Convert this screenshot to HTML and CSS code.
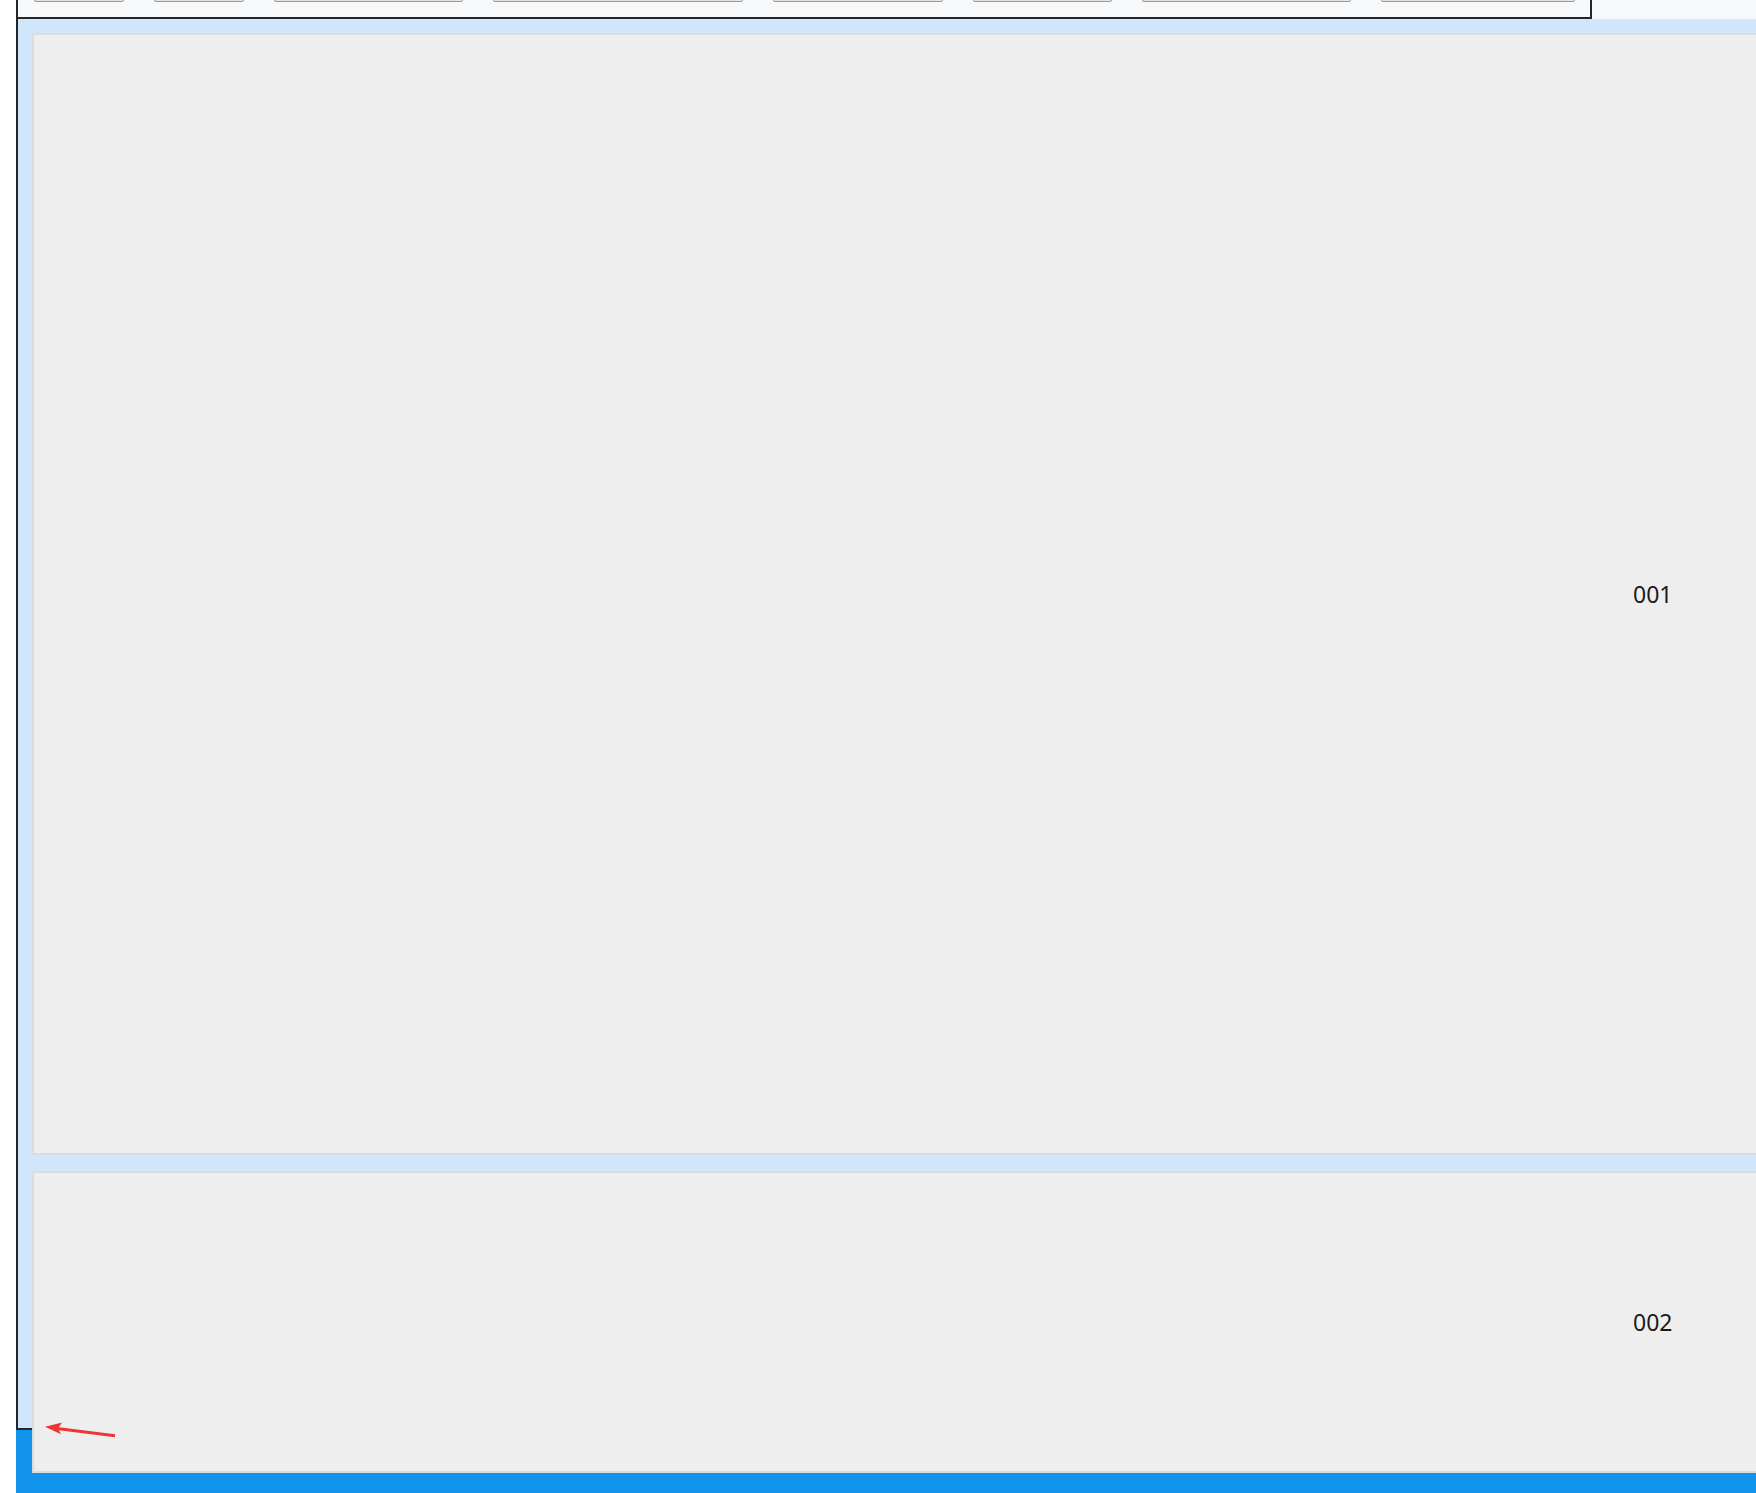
FILE: index.html
```html
<!DOCTYPE html>
<html lang="zh-CN">
<head>
	<meta charset="UTF-8">
	<title>layout</title>
	<link rel="stylesheet" href="styles.css">
</head>
<body>
	<div id="page">
		<div id="frame">
			<div class="top">
				<div class="toolbar">
					<div class="btn w90"></div>
					<div class="btn w90"></div>
					<div class="btn w189"></div>
					<div class="btn w250"></div>
					<div class="btn w170"></div>
					<div class="btn w139"></div>
					<div class="btn w209"></div>
					<div class="btn w194"></div>
				</div>
			</div>
			<div class="panels">
				<div class="panel big">001</div>
				<div class="panel small">002</div>
			</div>
		</div>
	</div>
	<!-- 标注箭头 -->
	<svg class="mark" width="80" height="24" viewBox="0 0 80 24">
		<line x1="15" y1="10.3" x2="75" y2="17.8" stroke="#ee3535" stroke-width="3"/>
		<polygon points="5,8.7 22,4.5 18,10.6 21,16.2" fill="#ee3535"/>
	</svg>
</body>
</html>
```

FILE: styles.css
```css
* {margin: 0; padding: 0; box-sizing: border-box;}
html, body {overflow: hidden; height: 100%;}
body {background: #fff; font-family: "Noto Sans", "Liberation Sans", "Noto Sans CJK SC", sans-serif; position: relative;}

#page {margin-left: 16px; height: 1493px; background: #1394ec;}
#frame {height: 1430px; background: #d0e7fb; border-left: 2px solid #22272b; border-bottom: 2px solid #22272b;}

.top {height: 19px; background: #f7f8fa; display: flex;}
.toolbar {width: 1574px; height: 19px; display: flex; gap: 30px; padding-left: 16px; border-right: 2px solid #22272b; border-bottom: 2px solid #22272b;}
.btn {height: 30px; margin-top: -28px; background: #e3e3e3; border: 1px solid #9a9a9a; border-radius: 2px;}
.w90 {width: 90px;}
.w139 {width: 139px;}
.w170 {width: 170px;}
.w189 {width: 189px;}
.w194 {width: 194px;}
.w209 {width: 209px;}
.w250 {width: 250px;}

.panels {padding: 14px 0 0 14px; display: flex; flex-direction: column; gap: 16px; width: 1820px;}
.panel {background: #eeeeee; border: 2px solid #dcdcdc; display: flex; align-items: center; padding-left: 1599px; font-size: 23px; color: #1b1b1b;}
.panel.big {height: 1122px;}
.panel.small {height: 302px;}

.mark {position: absolute; left: 40px; top: 1418px;}
```
